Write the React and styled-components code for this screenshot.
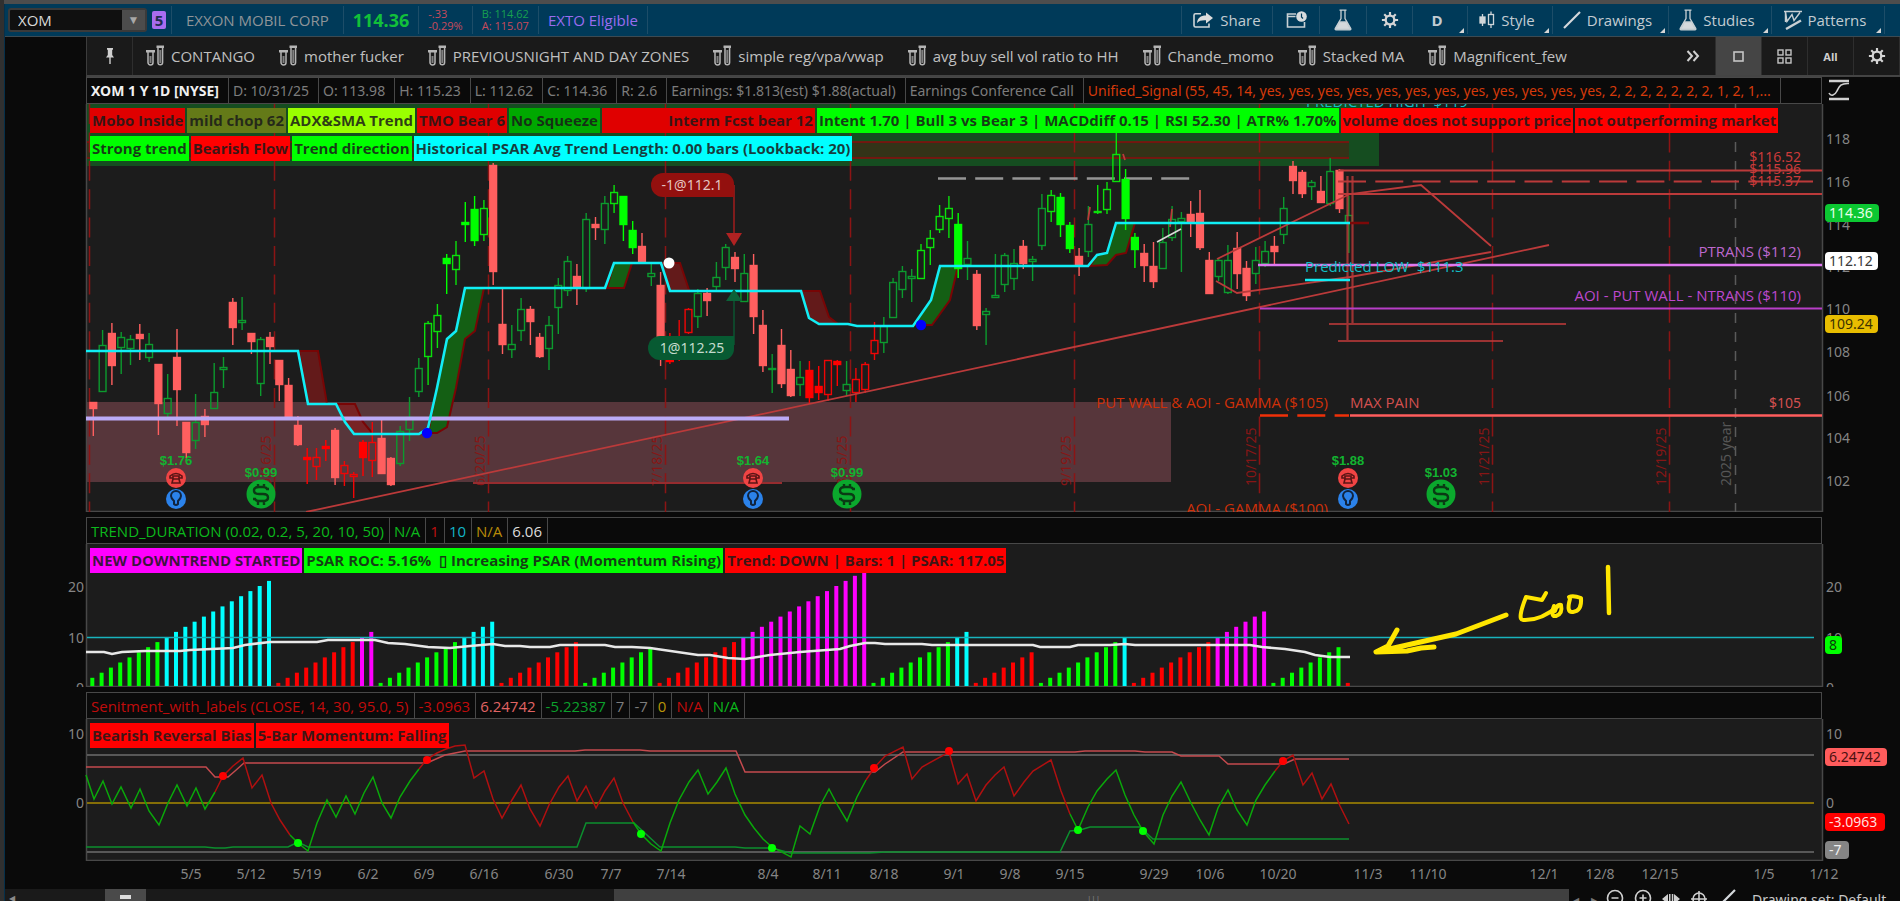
import React from 'react';
import styled, { createGlobalStyle } from 'styled-components';

const GlobalStyle = createGlobalStyle`
  * {
    box-sizing: border-box;
  }

  body {
    margin: 0;
    background: #0a0a0a;
    color: #8c8c8c;
    font-family: "Open Sans", "Noto Sans", sans-serif;
    font-size: 15px;
    overflow: hidden;
  }

  button, input {
    font: inherit;
    color: inherit;
  }
`;

/* ---------- page frame ---------- */

const Page = styled.div`
  display: flex;
  flex-direction: column;
  height: 100vh;
  overflow: hidden;
  border-left: 4px solid #303030;
`;

const WindowEdge = styled.div`
  flex: 0 0 4px;
  background: #4d4d4d;
`;

const Body = styled.main`
  flex: 1;
  min-height: 0;
  display: flex;
  flex-direction: column;
  border-left: 1px solid #06304a;
`;

/* ---------- symbol bar ---------- */

const SymbolBar = styled.header`
  flex: 0 0 33px;
  display: flex;
  align-items: stretch;
  padding-left: 3px;
  background: #003a59;
  border-bottom: 1px solid #3c4a52;
`;

const BarCell = styled.div`
  display: flex;
  align-items: center;
  padding: 0 ${props => props.$pad || 9}px;
  margin: 2px 0;
  border-right: 1px solid #1d4d68;
  color: ${props => props.$color || '#8f9498'};
  white-space: nowrap;
`;

const SymbolCell = styled(BarCell)`
  padding: 0 5px 0 0;
  gap: 5px;
`;

const SymbolBox = styled.div`
  display: flex;
  width: 139px;
  height: 24px;
  background: #101010;
  border: 2px solid #3a3a3a;
  border-radius: 3px;
`;

const SymbolInput = styled.input`
  flex: 1;
  min-width: 0;
  padding: 0 0 0 8px;
  background: none;
  border: 0;
  outline: 0;
  color: #d8d8d8;
`;

const DropButton = styled.button`
  width: 23px;
  padding: 0;
  border: 0;
  background: #4c4c4c;
  color: #a8a8a8;
  font-size: 12px;
  line-height: 20px;
`;

const LinkButton = styled.button`
  width: 14px;
  height: 18px;
  padding: 0;
  border: 0;
  border-radius: 2px;
  background: #a86cf0;
  color: #1d2c50;
  font-weight: bold;
  line-height: 18px;
`;

const LastPrice = styled.strong`
  font-size: 18px;
  color: #12c03a;
`;

const Stack = styled.div`
  display: flex;
  flex-direction: column;
  font-size: 11px;
  line-height: 12px;
`;

const BidText = styled.span`
  color: #17a050;
`;

const Spacer = styled.div`
  flex: 1;
`;

const RightCells = styled.div`
  display: flex;
  margin: 2px 15px 2px 0;
  border-left: 1px solid #1d4d68;
`;

const BarButton = styled.button`
  position: relative;
  display: flex;
  align-items: center;
  justify-content: center;
  gap: 6px;
  width: ${props => props.$width}px;
  padding: 0;
  padding-right: ${props => (props.$menu ? 6 : 0)}px;
  background: none;
  border: 0;
  border-right: 1px solid #1d4d68;
  color: #c3ccd2;
  font-weight: ${props => (props.$bold ? 'bold' : 'normal')};

  &::after {
    content: "";
    display: ${props => (props.$menu ? 'block' : 'none')};
    position: absolute;
    right: 3px;
    bottom: 1px;
    border-left: 5px solid transparent;
    border-bottom: 5px solid #d5d5d5;
  }
`;

/* ---------- study set toolbar ---------- */

const Toolbar = styled.nav`
  flex: 0 0 40px;
  display: flex;
  margin-left: 81px;
  background: #1a1a1a;
  border-left: 1px solid #3c3c3c;
  border-bottom: 2px solid #444;
`;

const PinButton = styled.button`
  width: 46px;
  padding: 0;
  display: flex;
  align-items: center;
  justify-content: center;
  background: none;
  border: 0;
  border-right: 1px solid #2e2e2e;
  color: #cfcfcf;
`;

const SetList = styled.div`
  display: flex;
  align-items: center;
  gap: 24px;
  padding-left: 13px;
`;

const SetButton = styled.button`
  display: flex;
  align-items: center;
  gap: 7px;
  padding: 0;
  background: none;
  border: 0;
  color: #c0c0c0;
  white-space: nowrap;
`;

const ViewButton = styled.button`
  width: 46px;
  padding: 0;
  display: flex;
  align-items: center;
  justify-content: center;
  border: 0;
  border-right: 1px solid #2e2e2e;
  background: ${props => (props.$active ? '#454545' : 'none')};
  color: #cfcfcf;
  font-size: 11px;
  font-weight: bold;
`;

/* ---------- chart panes ---------- */

const Pane = styled.section`
  flex: ${props => props.$grow} 1 0;
  min-height: 0;
  display: flex;
  flex-direction: column;
  margin-bottom: ${props => props.$gap}px;
`;

const ValueRow = styled.div`
  flex: 0 0 27px;
  display: flex;
  margin: 0 78px 0 81px;
  border: 1px solid #484848;
  background: #0a0a0a;
  font-family: ${props => (props.$wide ? '"Noto Sans", sans-serif' : 'inherit')};
  font-size: ${props => (props.$wide ? 14 : 15)}px;
  white-space: nowrap;
  overflow: hidden;
`;

const ValueCell = styled.span`
  display: flex;
  align-items: center;
  padding: 0 ${props => (props.$wide ? 9 : 5)}px 0 4px;
  border-right: 1px solid #484848;
  color: ${props => props.$color || '#7c7c7c'};
  font-weight: ${props => (props.$bold ? 'bold' : 'normal')};
`;

const ChartArea = styled.div`
  position: relative;
  flex: 1;
  min-height: 0;
`;

const ChartSvg = styled.svg`
  display: block;
  width: 100%;
  height: 100%;
  font-size: 15px;
`;

const AxisText = styled.text`
  font-family: "Noto Sans", sans-serif;
  font-size: 14px;
`;

const Tags = styled.div`
  position: absolute;
  top: 4px;
  left: 85px;
  display: flex;
  flex-direction: column;
  gap: 3px;
`;

const TagRow = styled.div`
  display: flex;
  gap: 2px;
`;

const Tag = styled.span`
  display: block;
  min-width: ${props => props.$min || 0}px;
  padding: 0 2px;
  background: ${props => props.$bg};
  color: rgba(26, 26, 26, 0.85);
  font-weight: bold;
  line-height: 25px;
  text-align: ${props => props.$align || 'left'};
  white-space: pre;
`;

const TimeAxis = styled.div`
  flex: 0 0 28px;
`;

const Corner = styled.button`
  position: absolute;
  right: 50px;
  top: -25px;
  padding: 0;
  background: none;
  border: 0;
  line-height: 0;
`;

/* ---------- bottom strip ---------- */

const BottomBar = styled.footer`
  flex: 0 0 12px;
  display: flex;
  background: #0a0a0a;
  overflow: hidden;
`;

const Track = styled.div`
  flex: ${props => props.$grow};
  height: 12px;
  background: ${props => props.$bg || '#1a1a1a'};
  color: #8a8a8a;
  font-size: 8px;
  line-height: 18px;
  text-align: ${props => props.$align || 'center'};
  text-indent: 4px;
`;

const MinusMark = styled.div`
  width: 11px;
  height: 4px;
  margin: 6px auto 0;
  background: #dcdcdc;
`;

const Tools = styled.div`
  flex: 0 0 331px;
  display: flex;
  align-items: center;
  height: 20px;
  gap: 4px;
  color: #c8c8c8;
  font-family: "Noto Sans", sans-serif;
  font-size: 14px;
`;

const ToolButton = styled.button`
  width: 24px;
  height: 20px;
  padding: 0;
  background: none;
  border: 0;
  color: inherit;
`;

const Arrows = styled.span`
  display: flex;
  gap: 12px;
  width: 30px;
  padding-left: 4px;
  color: #777;
  font-size: 8px;
`;

const DrawingSet = styled.span`
  margin-left: 9px;
  white-space: nowrap;
`;

/* ---------- icons ---------- */

const Tubes = () => (
  <svg width="18" height="22" viewBox="0 0 18 22" fill="none" stroke="#b5b5b5" strokeWidth="1.5">
    <path d="M0 6.2h9M10.5 1.8h7.5" strokeWidth="2.4" />
    <path d="M2 7v10.5a2.5 2.5 0 0 0 5 0V7M12 2.5v15a2.3 2.3 0 0 0 4.6 0v-15" />
    <path d="M4.5 11v7M14.3 5v13" strokeWidth="2" stroke="#808080" />
  </svg>
);

const Gear = () => (
  <svg width="18" height="18" viewBox="0 0 20 20" fill="none" stroke="#d5d5d5">
    <circle cx="10" cy="10" r="4.8" strokeWidth="2.6" />
    <path d="M10 1v3.5M10 15.5V19M1 10h3.5M15.5 10H19M3.6 3.6l2.5 2.5M13.9 13.9l2.5 2.5M16.4 3.6l-2.5 2.5M3.6 16.4l2.5-2.5" strokeWidth="2.4" />
  </svg>
);

const Flask = () => (
  <svg width="18" height="22" viewBox="0 0 18 22" fill="none" stroke="#c8d0d4" strokeWidth="1.3">
    <path d="M5.5 1.2h7M7 1.5v8L1.2 19.5a1 1 0 0 0 0.8 1.3h14a1 1 0 0 0 0.8-1.3L11 9.5v-8" />
    <path d="M5.5 13h7l3.8 7.2H1.7z" fill="#d5d9dc" />
  </svg>
);

const ShareIcon = () => (
  <svg width="21" height="16" viewBox="0 0 21 16" fill="none" stroke="#cfd5d8" strokeWidth="1.6">
    <path d="M8 1.8H2.5A1.5 1.5 0 0 0 1 3.3v10.2A1.5 1.5 0 0 0 2.5 15H16v-3.5" />
    <path d="M4 11c0.5-5 3.5-7.5 9-7.5V0.5l7 5.5-7 5.5V8.3c-4-0.2-7 0.4-9 2.700z" fill="#dcdcdc" stroke="none" />
  </svg>
);

const NoteIcon = () => (
  <svg width="21" height="18" viewBox="0 0 21 18" fill="none" stroke="#c8d0d4" strokeWidth="1.6">
    <path d="M10 3H1.5v13h17v-5M1.5 5.5h8" />
    <circle cx="15.5" cy="5.5" r="5.3" fill="#d8dcde" stroke="none" />
    <path d="M15.5 2.5V6L17 7.5" stroke="#003a59" strokeWidth="1.2" />
  </svg>
);

const CandlesIcon = () => (
  <svg width="16" height="18" viewBox="0 0 16 18" fill="none" stroke="#d0d6d9" strokeWidth="1.3">
    <path d="M3.5 3v12M12 0.5v3M12 14v3" />
    <rect x="1" y="6" width="5" height="6" fill="#d0d6d9" />
    <rect x="9.5" y="3.5" width="5" height="10" />
  </svg>
);

const LineIcon = () => (
  <svg width="18" height="18" viewBox="0 0 18 18">
    <path d="M1 17L17 1" stroke="#d5d9dc" strokeWidth="2.2" />
  </svg>
);

const PatternIcon = () => (
  <svg width="18" height="20" viewBox="0 0 18 20" fill="none" stroke="#c8d0d4" strokeWidth="1.4">
    <path d="M0 1.5h18M1.5 1.5l1.5 10 5-7 2 6 6-8M1.5 2v10" />
    <path d="M2 19L17 10.5" strokeWidth="2.4" />
  </svg>
);

const PinIcon = () => (
  <svg width="10" height="18" viewBox="0 0 10 18" fill="currentColor">
    <path d="M2 1h6v1.8H7.2V8L9 10.5H5.7V17H4.3v-6.5H1L2.8 8V2.8H2z" />
  </svg>
);

const GridIcon = () => (
  <svg width="15" height="15" viewBox="0 0 15 15" fill="none" stroke="#c5c5c5" strokeWidth="1.4">
    <rect x="1" y="1" width="5" height="5" /><rect x="9" y="1" width="5" height="5" />
    <rect x="1" y="9" width="5" height="5" /><rect x="9" y="9" width="5" height="5" />
  </svg>
);

const SquareIcon = () => (
  <svg width="11" height="11" viewBox="0 0 11 11">
    <rect x="1" y="1" width="9" height="9" fill="none" stroke="#c5c5c5" strokeWidth="1.6" />
  </svg>
);

const MoreIcon = () => (
  <svg width="14" height="12" viewBox="0 0 14 12" fill="none" stroke="#d0d0d0" strokeWidth="2">
    <path d="M1.5 1L6 6l-4.5 5M7.5 1L12 6l-4.5 5" />
  </svg>
);

const ScaleIcon = () => (
  <svg width="22" height="22" viewBox="0 0 22 22" fill="none" stroke="#d0d0d0">
    <path d="M1 2h20M1 20h20" strokeWidth="2.4" />
    <path d="M1 14c2 4 6 2 8-2s3-8 12-7.5" strokeWidth="1.6" />
  </svg>
);

/* ---------- chart data (bar spacing is 9.3, first bar at 93.3) ---------- */

const barX = i => 93.3 + i * 9.3;

// kind, high, body top, body bottom, low
// r/g = soft filled red, hollow green; F/G = bright green filled/hollow; B/R = bright red filled/hollow
const candles = `
r402,402,409,436 g330,345,392,392 r323,333,366,385 g332,337,348,374 g335,339,349,365 r324,334,339,360
g333,344,358,362 r364,364,404,435 g374,398,414,417 r329,357,390,426 r422,422,453,458 g394,422,441,449
r409,416,425,437 g363,392,409,409 g357,367,370,388 r298,302,328,345 g297,320,323,330 r333,333,342,354
g337,339,384,396 r332,337,347,364 r360,360,385,401 r378,385,417,420 r416,425,445,446 B448,457,460,484
R448,457,467,480 B440,446,449,461 r428,430,478,485 R461,465,474,486 R472,474,477,498 B440,442,458,476
R422,442,461,477 r420,438,474,474 r457,458,485,486 g426,431,464,466 g397,417,430,441 g358,368,392,397
G321,323,357,385 G304,315,332,348 F254,258,264,294 G241,255,270,285 F202,222,225,242 F196,209,241,246
G200,208,235,241 r163,165,272,285 r289,324,345,354 g325,344,350,358 g298,309,331,341 r306,309,322,345
r333,337,357,358 g316,325,349,370 g278,285,308,334 g256,261,291,296 r264,276,287,305 g213,219,289,292
r217,224,228,240 g196,203,230,244 G185,192,204,213 F196,196,225,241 F221,230,248,254 r233,246,262,262
g262,273,277,286 r272,285,342,366 B333,357,362,364 R320,343,350,361 R308,309,333,334 g289,293,317,328
r288,293,301,316 g262,277,287,290 g244,247,268,280 r252,257,269,282 g254,273,302,302 r254,265,317,334
r310,325,366,372 g354,368,370,393 r329,345,384,388 r350,369,396,397 g361,377,385,396 B361,370,398,404
B366,386,393,400 R360,360,395,401 B360,361,365,386 g361,384,391,396 R368,379,393,402 R362,364,390,393
R322,340,354,360 g317,326,343,353 g278,282,318,318 g266,271,290,298 g269,276,279,302 G244,250,279,279
G230,238,248,265 G205,216,230,233 G196,208,219,238 F213,224,269,278 g241,258,265,280 r270,274,326,330
g308,311,315,345 g254,295,298,298 g253,255,285,292 g249,263,279,290 r240,246,264,269 g256,259,262,281
g194,208,246,250 G190,195,212,222 F193,197,225,237 F222,225,249,253 r248,256,265,276 g206,224,252,257
G185,211,213,214 G182,189,210,214 G130,154,182,182 F169,179,219,230 F233,237,250,268 r244,253,266,282
r242,266,282,288 g228,242,269,269 g206,219,238,241 g212,218,222,272 r201,214,222,237 r190,213,248,250
r252,260,294,294 g258,260,277,281 g245,260,293,294 r232,248,274,289 r261,268,296,301 g247,260,274,284
g241,251,264,267 r236,246,252,264 g197,208,235,244 r161,166,181,194 r170,172,194,198 g180,182,187,200
r176,191,203,203 g158,171,204,206 r169,170,209,213 g196,215,223,253
`.trim().split(/\s+/).map(c => ({ kind: c[0], v: c.slice(1).split(',').map(Number) }));

const candleColor = { r: '#ff5f5f', g: '#0c9a2e', F: '#00ff00', G: '#0be00b', B: '#ff0000', R: '#f00505' };

const psar = '86,351 298,351 308,404 336,404 345,422 354,434 419,434 428,428 437,388 447,339 456,331 465,288 605,288 614,263 661,263 670,291 801,291 809,318 819,324 848,324 857,326 913,326 931,300 940,266 1088,266 1097,255 1107,253 1116,223 1350,223';

const redClouds = [
  '299,351 318,351 327,404 308,404',
  '336,404 355,404 363,422 373,434 354,434 345,422',
  '661,263 680,263 689,290 670,291',
  '801,291 820,291 829,317 838,324 819,324 809,318',
];

const greenClouds = [
  '428,433 437,388 447,339 456,331 465,288 484,288 475,331 465,339 456,388 447,427 437,433',
  '607,288 614,263 632,263 624,288',
  '914,325 931,300 940,266 958,266 950,300 932,325',
  '1090,266 1097,255 1107,253 1116,223 1135,223 1126,253 1116,255 1107,265',
];

const expirations = [
  [89, ''], [274, '5/16/25'], [488, '6/20/25'], [665, '7/18/25'], [850, '8/15/25'],
  [1074, '9/19/25'], [1259, '10/17/25'], [1492, '11/21/25'], [1669, '12/19/25'],
];

const priceTicks = [[118, 139], [116, 182], [114, 225], [112, 267], [110, 309], [108, 352], [106, 396], [104, 438], [102, 481]];

// first bar, first value, bar count, trend
const runs = [
  [0, 2, 20, 'up'], [20, 1, 11, 'down'], [31, 1, 13, 'up'], [44, 1, 9, 'down'], [53, 1, 8, 'up'],
  [61, 1, 23, 'down'], [84, 1, 11, 'up'], [95, 1, 7, 'down'], [102, 1, 10, 'up'],
  [112, 1, 15, 'down'], [127, 1, 8, 'up'], [135, 1, 1, 'down'],
];

const durationBars = runs.flatMap(([start, first, count, dir]) =>
  Array.from({ length: count }, (_, k) => {
    const value = first + k;
    const fill = dir === 'up'
      ? (value >= 10 ? '#00ffff' : '#00ff00')
      : (value >= 10 ? '#ff00ff' : '#ff0000');
    return { x: barX(start + k) - 3, value, fill };
  })
);

const average = '86,652 104,652 112,654 122,652 145,651 180,651 190,650 233,648 245,645 270,642 317,642 328,640 375,640 388,643 405,644 428,647 450,648 470,646 493,644 505,646 520,646 530,647 550,647 560,645 605,645 615,647 632,647 650,648 698,655 710,655 728,658 745,659 770,655 800,652 840,649 850,646 865,643 875,643 885,644 922,644 932,645 1033,645 1040,647 1070,647 1078,645 1110,645 1125,644 1135,645 1250,645 1262,647 1285,649 1305,652 1315,655 1330,657 1350,657';

const upperBand = '86,767 206,767 215,777 228,777 235,771 244,763 427,763 445,755 465,751 575,751 585,750 640,750 650,751 736,751 745,772 875,772 885,764 903,752 1075,752 1085,751 1135,751 1145,752 1172,752 1181,756 1219,756 1228,764 1284,764 1295,759 1349,759';
const lowerBand = '86,847 205,847 215,848 225,848 233,847 288,847 298,842 308,847 577,847 586,823 634,823 660,847 735,847 745,848 772,848 790,853 870,853 885,852 1060,852 1070,831 1080,830 1090,827 1140,827 1153,839 1349,839';

const sentiment = [
  ['#0aa80a', '86,775 94,799 103,781 112,804 121,787 131,808 140,789 149,811 159,825 168,803 177,785 187,806 196,788 205,809 215,792'],
  ['#b01010', '215,792 223,776 233,766 243,758 252,788 262,775 271,803 280,820 290,835'],
  ['#0aa80a', '290,835 298,843 308,851 317,823 327,800 336,817 346,796 355,814 364,793 373,777 382,803 391,818 400,797 410,781 419,769'],
  ['#b01010', '419,769 427,759 437,753 446,749 455,746 465,745 474,778 484,771 493,799 502,818 512,800 521,785 530,809 540,826 549,805 559,787 568,776 577,801 586,786 596,808 605,791 614,778 623,803 633,822'],
  ['#0aa80a', '633,822 641,834 651,844 661,851 670,823 679,800 689,782 698,770 708,794 717,782 726,768 735,794 745,815 754,828 763,839 772,847 791,857 800,826 810,834 820,806 829,789 838,806 847,821 857,797 866,780'],
  ['#b01010', '866,780 875,767 885,756 903,747 912,779 922,767 949,752 958,784 967,774 976,801 986,785 995,775 1004,767 1014,796 1024,782 1033,771 1051,760 1061,791 1070,814'],
  ['#0aa80a', '1070,814 1078,830 1088,807 1097,791 1107,779 1116,770 1125,795 1134,815 1143,831 1154,844 1163,815 1172,796 1181,782 1191,803 1200,820 1209,835 1218,808 1228,790 1237,810 1247,825 1256,800 1265,785 1275,771'],
  ['#b01010', '1275,771 1283,761 1293,755 1303,785 1312,773 1322,799 1331,784 1340,806 1349,824'],
];

const signalDots = [
  [223, 776, '#ff0000'], [427, 760, '#ff0000'], [874, 768, '#ff0000'], [949, 751, '#ff0000'], [1283, 761, '#ff0000'],
  [298, 843, '#00ff00'], [641, 834, '#00ff00'], [772, 848, '#00ff00'], [1078, 830, '#00ff00'], [1143, 831, '#00ff00'],
];

const dates = [
  ['5/5', 191], ['5/12', 251], ['5/19', 307], ['6/2', 368], ['6/9', 424], ['6/16', 484], ['6/30', 559],
  ['7/7', 611], ['7/14', 671], ['8/4', 768], ['8/11', 827], ['8/18', 884], ['9/1', 954], ['9/8', 1010],
  ['9/15', 1070], ['9/29', 1154], ['10/6', 1210], ['10/20', 1278], ['11/3', 1368], ['11/10', 1428],
  ['12/1', 1544], ['12/8', 1600], ['12/15', 1660], ['1/5', 1764], ['1/12', 1824],
];

/* ---------- chart pieces ---------- */

const Chart = ({ top, height, children }) => (
  <ChartSvg viewBox={`5 ${top} 1895 ${height}`} preserveAspectRatio="none">
    {children}
  </ChartSvg>
);

const Plot = ({ top, height }) => (
  <g>
    <rect x="86" y={top} width="1736" height={height} fill="#1c1c1c" />
    <path d={`M86.5 ${top}v${height - 0.5}h1736v-${height}`} fill="none" stroke="#484848" strokeWidth="1.5" />
  </g>
);

const Tick = ({ x = 1826, y, children, end }) => (
  <AxisText x={x} y={y + 5} fill="#858585" textAnchor={end ? 'end' : 'start'}>{children}</AxisText>
);

const Badge = ({ y, width, fill, color, children }) => (
  <g>
    <rect x="1825" y={y - 9} width={width} height="18" rx="4" fill={fill} />
    <AxisText x="1829" y={y + 5} fill={color}>{children}</AxisText>
  </g>
);

const Candle = ({ i, kind, v }) => {
  const x = barX(i);
  const [high, top, bottom, low] = v;
  const color = candleColor[kind];
  const hollow = 'gGR'.includes(kind);
  return (
    <g stroke={color} strokeWidth="1.4">
      <path d={`M${x} ${high}V${top}M${x} ${bottom}V${low}`} />
      <rect
        x={x - 3.4}
        y={top + 0.5}
        width="6.8"
        height={Math.max(bottom - top - 1, 1)}
        fill={hollow ? 'none' : color}
      />
    </g>
  );
};

const MarkText = styled.text`
  font-family: "Liberation Sans", sans-serif;
  font-size: 13px;
  font-weight: bold;
  fill: #12b430;
  text-anchor: middle;
`;

const EarningsMark = ({ x, label }) => (
  <g>
    <MarkText x={x} y="465">{label}</MarkText>
    <circle cx={x} cy="478" r="10" fill="#f04444" />
    <path d={`M${x - 6} 476q6 -5 12 0v2h-3v-2h-6v2h-3zM${x - 4} 483l1 -4h6l1 4z`} fill="none" stroke="#5a1414" strokeWidth="1.6" />
    <circle cx={x} cy="499" r="10" fill="#2b82ea" />
    <path d={`M${x - 2} 504v-3q-3 -3 -3 -5a5 5 0 0 1 10 0q0 2 -3 5v3q-2 2 -4 0z`} fill="none" stroke="#10243f" strokeWidth="2" />
  </g>
);

const DividendMark = ({ x, label }) => (
  <g>
    <MarkText x={x} y="477">{label}</MarkText>
    <circle cx={x} cy="494" r="14.5" fill="#0ba82d" />
    <path d={`M${x + 8} 489h-2q-1 -2 -4 -2h-4q-5 0 -5 3.5t5 3.5h4q5 0 5 3.5t-5 3.5h-4q-3 0 -4 -2h-2M${x - 3} 487v-3M${x + 3} 487v-3M${x - 3} 501v4M${x + 3} 501v4`} fill="none" stroke="#0a3a14" strokeWidth="2.4" />
  </g>
);

const PriceChart = () => (
  <Chart top={104} height={408}>
    <Plot top={104} height={408} />
    <rect x="87" y="104" width="1292" height="62" fill="#154d20" />
    <rect x="87" y="142" width="1262" height="16" fill="#333318" />
    <path d="M87 142h1262M87 158h1262" stroke="#8a0c0c" strokeWidth="1.5" />
    <rect x="87" y="402" width="1084" height="80" fill="#57363b" />

    {expirations.map(([x, label]) => (
      <g key={x}>
        <path d={`M${x + 0.5} 104V512`} stroke="#8c1414" strokeWidth="1.5" strokeDasharray="20 8.4" />
        <AxisText transform={`translate(${x - 3} 486) rotate(-90)`} fill="#861616">{label}</AxisText>
      </g>
    ))}
    <path d="M1735.5 104V512" stroke="#5a5a5a" strokeWidth="1.5" strokeDasharray="10 9" />
    <AxisText transform="translate(1731 486) rotate(-90)" fill="#565656">2025 year</AxisText>

    <path d="M938 178.5h252" stroke="#959595" strokeWidth="2.5" strokeDasharray="28 9.2" />
    {redClouds.map(p => <polygon key={p} points={p} fill="#8a1a1a" fillOpacity="0.65" stroke="#780505" strokeWidth="2" />)}
    {greenClouds.map(p => <polygon key={p} points={p} fill="#145f14" stroke="#780505" strokeWidth="2" />)}

    {candles.map((c, i) => <Candle key={i} i={i} {...c} />)}

    <g fill="none" stroke="#bb3a3a" strokeWidth="1.8">
      <path d="M306 512L1549 245" />
      <path d="M1216 281L1237 293L1350 277L1491 252" />
      <path d="M1217 259L1350 194L1421 185L1491 246" />
      <path d="M1338 170.5H1822M1338 194H1822" />
      <path d="M1338 181.5H1813" strokeDasharray="28 9.3" />
      <path d="M1088 220l2 -13M1170 227l2 -18M1123 154l2 6" />
      <path d="M1329 324H1566M1338 341H1503M1347.5 176V341M1352.5 176V324" strokeWidth="2.2" opacity="0.8" />
      <path d="M473 483H782" stroke="#962c2f" />
    </g>
    <path d="M1157 242L1181 229" stroke="#dadada" strokeWidth="1.6" />
    <path d="M86 418.5H789" stroke="#bbaaf6" strokeWidth="4" />
    <path d="M1350 223H1369" stroke="#7c0808" strokeWidth="2.5" />
    <polyline points={psar} fill="none" stroke="#10eef5" strokeWidth="2.6" />
    <path d="M1258 265H1822" stroke="#df78f2" strokeWidth="2.6" />
    <path d="M1260 308.5H1822" stroke="#b83ec8" strokeWidth="1.8" />
    <path d="M1305 280H1350" stroke="#10eef5" strokeWidth="2.6" />
    <path d="M1260 415.5H1349" stroke="#f03008" strokeWidth="2.6" strokeDasharray="28 9.3" />
    <path d="M1350 415.5H1822" stroke="#ff5c5c" strokeWidth="2.6" />

    <circle cx="669" cy="263" r="5.5" fill="#fff" />
    <circle cx="427" cy="433" r="5.2" fill="#0000ff" />
    <circle cx="921" cy="325" r="5.2" fill="#0000ff" />

    <text x="1306" y="107" fill="#12bfc6">{'PREDICTED HIGH\u00a0 $119'}</text>
    <text x="1305" y="272" fill="#12bfc6">{'Predicted LOW\u00a0 $111.3'}</text>
    <g textAnchor="end">
      <text x="1328" y="408" fill="#d03008">PUT WALL &amp; AOI - GAMMA ($105)</text>
      <text x="1328" y="514" fill="#d03008">AOI - GAMMA ($100)</text>
      <text x="1801" y="257" fill="#bd68ce">PTRANS ($112)</text>
      <text x="1801" y="301" fill="#bd48cd">AOI - PUT WALL - NTRANS ($110)</text>
      <AxisText x="1801" y="408" fill="#d45050">$105</AxisText>
      <AxisText x="1801" y="162" fill="#cb3a3a">$116.52</AxisText>
      <AxisText x="1801" y="174" fill="#cb3a3a">$115.96</AxisText>
      <AxisText x="1801" y="186" fill="#cb3a3a">$115.37</AxisText>
    </g>
    <text x="1350" y="408" fill="#d45050">MAX PAIN</text>

    <path d="M734 185V234" stroke="#a01c1c" strokeWidth="1.5" />
    <path d="M726 233h16l-8 13z" fill="#b02222" />
    <path d="M663 173h60a11 11 0 0 1 11 11v13h-71a12 12 0 0 1 0 -24z" fill="#93100e" />
    <AxisText x="692" y="190" textAnchor="middle" fill="#e3c3c0">-1@112.1</AxisText>
    <path d="M734 345V300" stroke="#0b5530" strokeWidth="1.5" />
    <path d="M726 301h16l-8 -12z" fill="#0b6238" />
    <path d="M660 336h74v13a11 11 0 0 1 -11 11h-63a12 12 0 0 1 0 -24z" fill="#075a32" />
    <AxisText x="692" y="353" textAnchor="middle" fill="#c3dacd">1@112.25</AxisText>

    <EarningsMark x={176} label="$1.76" />
    <DividendMark x={261} label="$0.99" />
    <EarningsMark x={753} label="$1.64" />
    <DividendMark x={847} label="$0.99" />
    <EarningsMark x={1348} label="$1.88" />
    <DividendMark x={1441} label="$1.03" />

    {priceTicks.map(([price, y]) => <Tick key={price} y={y}>{price}</Tick>)}
    <Badge y={213} width={54} fill="#0cc832" color="#e6ffe9">114.36</Badge>
    <Badge y={261} width={53} fill="#fff" color="#3a3a3a">112.12</Badge>
    <Badge y={324} width={53} fill="#e8bd00" color="#3c3100">109.24</Badge>
  </Chart>
);

const DurationChart = () => (
  <Chart top={544} height={143}>
    <Plot top={544} height={143} />
    {durationBars.map(b => (
      <rect key={b.x} x={b.x} y={637 - (b.value - 10) * 5.1} width="4" height={49 + (b.value - 10) * 5.1} fill={b.fill} />
    ))}
    <path d="M87 637.5H1814" stroke="#18b3bd" strokeWidth="1.5" />
    <polyline points={average} fill="none" stroke="#e8e8e8" strokeWidth="2.6" />
    <g fill="none" stroke="#ffe600" strokeWidth="5" strokeLinecap="round" strokeLinejoin="round">
      <path d="M1506 615L1456 634L1376 652L1407 651L1421 648L1434 647M1397 630L1388 646L1376 652" />
      <path d="M1546 593L1542 600L1526 597Q1517 620 1523 620Q1541 621 1558 606" strokeWidth="4" />
      <path d="M1554 606Q1550 617 1556 616Q1563 614 1561 605Q1557 604 1555 611M1570 599Q1566 613 1573 612Q1582 611 1581 598Q1573 595 1569 597" strokeWidth="4" />
      <path d="M1608 567L1609 613" strokeWidth="4.5" />
    </g>
    <Tick x={84} y={587} end>20</Tick>
    <Tick x={84} y={638} end>10</Tick>
    <Tick x={84} y={688} end>0</Tick>
    <Tick y={587}>20</Tick>
    <Tick y={638}>10</Tick>
    <Tick y={688}>0</Tick>
    <Badge y={645} width={17} fill="#00ff00" color="#0a3a0a">8</Badge>
  </Chart>
);

const SentimentChart = () => (
  <Chart top={719} height={142}>
    <Plot top={719} height={142} />
    <path d="M87 755H1814M87 852H1814" stroke="#6c6c6c" strokeWidth="1.5" />
    <path d="M87 803H1814" stroke="#a88a00" strokeWidth="1.5" />
    <polyline points={upperBand} fill="none" stroke="#c44a4e" strokeWidth="1.5" />
    <polyline points={lowerBand} fill="none" stroke="#0c8f2e" strokeWidth="1.5" />
    {sentiment.map(([color, points]) => (
      <polyline key={points} points={points} fill="none" stroke={color} strokeWidth="1.5" />
    ))}
    {signalDots.map(([x, y, color]) => <circle key={x} cx={x} cy={y} r="4" fill={color} />)}
    <Tick x={84} y={734} end>10</Tick>
    <Tick x={84} y={803} end>0</Tick>
    <Tick y={734}>10</Tick>
    <Tick y={803}>0</Tick>
    <Badge y={757} width={62} fill="#ff5c5c" color="#4a1010">6.24742</Badge>
    <Badge y={822} width={60} fill="#ff0000" color="#ffdede">-3.0963</Badge>
    <Badge y={850} width={24} fill="#858585" color="#eee">-7</Badge>
  </Chart>
);

/* ---------- text content ---------- */

const studySets = [
  'CONTANGO', 'mother fucker', 'PREVIOUSNIGHT AND DAY ZONES', 'simple reg/vpa/vwap',
  'avg buy sell vol ratio to HH', 'Chande_momo', 'Stacked MA', 'Magnificent_few',
];

const priceValues = [
  ['XOM 1 Y 1D [NYSE]', '#f0f0f0', true], ['D: 10/31/25'], ['O: 113.98'], ['H: 115.23'], ['L: 112.62'],
  ['C: 114.36'], ['R: 2.6'], ['Earnings: $1.813(est) $1.88(actual)'], ['Earnings Conference Call'],
  ['Unified_Signal (55, 45, 14, yes, yes, yes, yes, yes, yes, yes, yes, yes, yes, yes, yes, 2, 2, 2, 2, 2, 2, 2, 1, 2, 1,...', '#d63a0a'],
];

const durationValues = [
  ['TREND_DURATION (0.02, 0.2, 5, 20, 10, 50)', '#0cb81c'], ['N/A', '#0cb81c'], ['1', '#c01010'],
  ['10', '#12b4c8'], ['N/A', '#b88a08'], ['6.06', '#dcdcdc'],
];

const sentimentValues = [
  ['Senitment_with_labels (CLOSE, 14, 30, 95.0, 5)', '#c00c0c'], ['-3.0963', '#c00c0c'], ['6.24742', '#e06464'],
  ['-5.22387', '#0ca02c'], ['7'], ['-7'], ['0', '#b89408'], ['N/A', '#c00c0c'], ['N/A', '#0cb81c'],
];

const Values = ({ items, wide }) => (
  <ValueRow $wide={wide}>
    {items.map(([text, color, bold], i) => (
      <ValueCell key={i} $color={color} $bold={bold} $wide={wide}>{text}</ValueCell>
    ))}
  </ValueRow>
);

const App = () => {
  return (
    <Page>
      <GlobalStyle />
      <WindowEdge />
      <Body>
        <SymbolBar>
          <SymbolCell>
            <SymbolBox>
              <SymbolInput aria-label="Symbol" defaultValue="XOM" />
              <DropButton aria-label="Symbol list">▼</DropButton>
            </SymbolBox>
            <LinkButton>5</LinkButton>
          </SymbolCell>
          <BarCell $pad={14}>EXXON MOBIL CORP</BarCell>
          <BarCell><LastPrice>114.36</LastPrice></BarCell>
          <BarCell $color="#c84a5c"><Stack><span>-.33</span><span>-0.29%</span></Stack></BarCell>
          <BarCell $color="#c84a5c">
            <Stack>
              <BidText>B: 114.62</BidText>
              <span>A: 115.07</span>
            </Stack>
          </BarCell>
          <BarCell $color="#9a6cf0">EXTO Eligible</BarCell>
          <Spacer />
          <RightCells>
            <BarButton $width={91}><ShareIcon />Share</BarButton>
            <BarButton $width={47} aria-label="Notes"><NoteIcon /></BarButton>
            <BarButton $width={47} aria-label="Study editor"><Flask /></BarButton>
            <BarButton $width={46} aria-label="Settings"><Gear /></BarButton>
            <BarButton $width={55} $menu $bold>D</BarButton>
            <BarButton $width={85} $menu><CandlesIcon />Style</BarButton>
            <BarButton $width={116} $menu><LineIcon />Drawings</BarButton>
            <BarButton $width={103} $menu><Flask />Studies</BarButton>
            <BarButton $width={113} $menu><PatternIcon />Patterns</BarButton>
          </RightCells>
        </SymbolBar>

        <Toolbar>
          <PinButton aria-label="Pin"><PinIcon /></PinButton>
          <SetList>
            {studySets.map(name => (
              <SetButton key={name}><Tubes />{name}</SetButton>
            ))}
          </SetList>
          <Spacer />
          <ViewButton aria-label="More"><MoreIcon /></ViewButton>
          <ViewButton $active aria-label="Single chart"><SquareIcon /></ViewButton>
          <ViewButton aria-label="Chart grid"><GridIcon /></ViewButton>
          <ViewButton>All</ViewButton>
          <ViewButton aria-label="Chart settings"><Gear /></ViewButton>
        </Toolbar>

        <Pane $grow={435} $gap={5}>
          <Values items={priceValues} wide />
          <ChartArea>
            <PriceChart />
            <Corner aria-label="Scale"><ScaleIcon /></Corner>
            <Tags>
              <TagRow>
                <Tag $bg="#e00000">Mobo Inside</Tag>
                <Tag $bg="#647a18">mild chop 62</Tag>
                <Tag $bg="#9aff00">ADX&amp;SMA Trend</Tag>
                <Tag $bg="#e00000">TMO Bear 6</Tag>
                <Tag $bg="#00a800">No Squeeze</Tag>
                <Tag $bg="#e00000" $min={213} $align="right">Interm Fcst bear 12</Tag>
                <Tag $bg="#00ff00">Intent 1.70 | Bull 3 vs Bear 3 | MACDdiff 0.15 | RSI 52.30 | ATR% 1.70%</Tag>
                <Tag $bg="#ff0000">volume does not support price</Tag>
                <Tag $bg="#ff0000">not outperforming market</Tag>
              </TagRow>
              <TagRow>
                <Tag $bg="#00ff00">Strong trend</Tag>
                <Tag $bg="#ff0000">Bearish Flow</Tag>
                <Tag $bg="#00ff00">Trend direction</Tag>
                <Tag $bg="#00ffff">Historical PSAR Avg Trend Length: 0.00 bars (Lookback: 20)</Tag>
              </TagRow>
            </Tags>
          </ChartArea>
        </Pane>

        <Pane $grow={170} $gap={5}>
          <Values items={durationValues} />
          <ChartArea>
            <DurationChart />
            <Tags>
              <TagRow>
                <Tag $bg="#ff00ff">NEW DOWNTREND STARTED</Tag>
                <Tag $bg="#00ff00">PSAR ROC: 5.16%  ▯ Increasing PSAR (Momentum Rising)</Tag>
                <Tag $bg="#ff0000">Trend: DOWN | Bars: 1 | PSAR: 117.05</Tag>
              </TagRow>
            </Tags>
          </ChartArea>
        </Pane>

        <Pane $grow={169} $gap={0}>
          <Values items={sentimentValues} />
          <ChartArea>
            <SentimentChart />
            <Tags>
              <TagRow>
                <Tag $bg="#ff0000">Bearish Reversal Bias</Tag>
                <Tag $bg="#ff0000" $min={193}>5-Bar Momentum: Falling</Tag>
              </TagRow>
            </Tags>
          </ChartArea>
        </Pane>

        <TimeAxis>
          <Chart top={861} height={28}>
            {dates.map(([label, x]) => (
              <AxisText key={label} x={x} y="879" textAnchor="middle" fill="#858585">{label}</AxisText>
            ))}
          </Chart>
        </TimeAxis>

        <BottomBar>
          <Track $grow={100} $align="left">◀</Track>
          <Track $grow={41} $bg="#4a4a4a"><MinusMark /></Track>
          <Track $grow={468} />
          <Track $grow={955} $bg="#404040">|||</Track>
          <Tools>
            <Arrows><span>◀</span><span>▶</span></Arrows>
            <ToolButton aria-label="Zoom out">
              <svg width="20" height="20" viewBox="0 0 20 20" fill="none" stroke="#cfcfcf" strokeWidth="1.6">
                <circle cx="10" cy="9" r="7.5" /><path d="M6.5 9h7M15 15l4 4" />
              </svg>
            </ToolButton>
            <ToolButton aria-label="Zoom in">
              <svg width="20" height="20" viewBox="0 0 20 20" fill="none" stroke="#cfcfcf" strokeWidth="1.6">
                <circle cx="10" cy="9" r="7.5" /><path d="M6.5 9h7M10 5.5v7M15 15l4 4" />
              </svg>
            </ToolButton>
            <ToolButton aria-label="Pan">
              <svg width="20" height="20" viewBox="0 0 20 20" fill="#cfcfcf">
                <path d="M1 10l6-5v10zM19 10l-6-5v10zM8 5h1.500v10H8zM10.800 5h1.500v10h-1.500z" />
              </svg>
            </ToolButton>
            <ToolButton aria-label="Crosshair">
              <svg width="20" height="20" viewBox="0 0 20 20" fill="none" stroke="#cfcfcf" strokeWidth="1.6">
                <circle cx="10" cy="10" r="6" /><path d="M10 2v16M2 10h16" />
              </svg>
            </ToolButton>
            <ToolButton aria-label="Draw line"><LineIcon /></ToolButton>
            <DrawingSet>Drawing set: Default</DrawingSet>
          </Tools>
        </BottomBar>
      </Body>
    </Page>
  );
};

export default App;
